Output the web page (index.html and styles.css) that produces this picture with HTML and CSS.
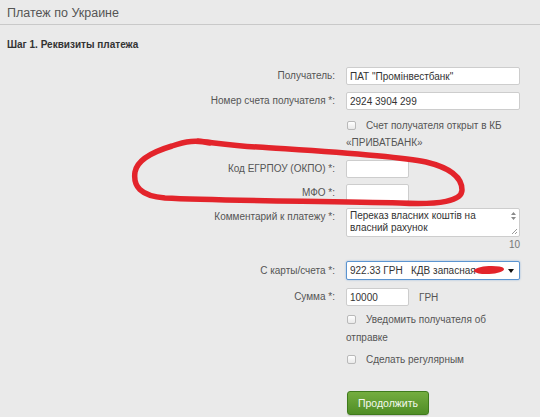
FILE: index.html
```html
<!DOCTYPE html>
<html lang="ru">
<head>
<meta charset="utf-8">
<title>Платеж по Украине</title>
<link rel="stylesheet" href="styles.css">
</head>
<body>
<div class="page">
  <h1 class="title">Платеж по Украине</h1>
  <h2 class="step">Шаг 1. Реквизиты платежа</h2>
  <div class="form">
    <div class="row r1">
      <div class="label">Получатель:</div>
      <div class="field"><input class="inp wide" type="text" value="ПАТ &quot;Промінвестбанк&quot;"></div>
    </div>
    <div class="row r2">
      <div class="label">Номер счета получателя *:</div>
      <div class="field"><input class="inp wide" type="text" value="2924 3904 299"></div>
    </div>
    <div class="row r3">
      <div class="label"></div>
      <div class="field check-text"><span class="cb"></span>Счет получателя открыт в КБ «ПРИВАТБАНК»</div>
    </div>
    <div class="row r4">
      <div class="label">Код ЕГРПОУ (ОКПО) *:</div>
      <div class="field"><input class="inp short" type="text"></div>
    </div>
    <div class="row r5">
      <div class="label">МФО *:</div>
      <div class="field"><input class="inp short" type="text"></div>
    </div>
    <div class="row r6 top">
      <div class="label lt">Комментарий к платежу *:</div>
      <div class="field">
        <div class="ta">
          <div class="ta-text">Переказ власних коштів на власний рахунок</div>
          <div class="ta-scroll">
            <svg width="7" height="10" viewBox="0 0 7 10"><path d="M1 4 L3.5 1 L6 4 Z M1 6 L3.5 9 L6 6 Z" fill="#8a8a8a"/></svg>
          </div>
          <svg class="grip" width="7" height="7" viewBox="0 0 7 7"><path d="M1 6 L6 1 M4 6 L6 4" stroke="#9a9a9a" stroke-width="1"/></svg>
        </div>
        <div class="count">10</div>
      </div>
    </div>
    <div class="row r7">
      <div class="label">С карты/счета *:</div>
      <div class="field">
        <div class="sel">
          <span class="sel-text">922.33 ГРН&nbsp;&nbsp;&nbsp;КДВ запасная</span>
          <span class="smudge"></span>
          <span class="arrow"></span>
        </div>
      </div>
    </div>
    <div class="row r8">
      <div class="label">Сумма *:</div>
      <div class="field"><input class="inp short" type="text" value="10000"><span class="cur">ГРН</span></div>
    </div>
    <div class="row r9">
      <div class="label"></div>
      <div class="field check-text lh18"><span class="cb"></span>Уведомить получателя об отправке</div>
    </div>
    <div class="row r10">
      <div class="label"></div>
      <div class="field check-text lh18"><span class="cb"></span>Сделать регулярным</div>
    </div>
    <div class="row r11">
      <div class="label"></div>
      <div class="field"><button class="btn" type="button">Продолжить</button></div>
    </div>
  </div>
  <svg class="circle" width="540" height="417" viewBox="0 0 540 417">
    <path d="M210 143 C196 140 186 141 172 146 C152 152 137 161 135 172 C133 186 140 196 165 198 C220 201 330 201 400 203 C440 205 462 201 462 190 C462 177 451 168 426 162 C392 155 300 150 258 147 C236 146 216 143 198 141" fill="none" stroke="#e3242b" stroke-width="5.5" stroke-linecap="round" stroke-linejoin="round"/>
  </svg>
</div>
</body>
</html>
```

FILE: styles.css
```css
html, body {
  margin: 0;
  padding: 0;
}
body {
  background: #eaeaea;
  font-family: "Liberation Sans", Arial, sans-serif;
  color: #555;
  font-size: 10px;
}
.page {
  position: relative;
  width: 540px;
  height: 417px;
  overflow: hidden;
}
.title {
  margin: 0;
  font-size: 12.5px;
  font-weight: normal;
  line-height: 18px;
  color: #555;
  padding: 4px 7px 2px;
  border-bottom: 1px solid #c9c9c9;
}
.step {
  margin: 13px 7px 0;
  font-size: 10px;
  line-height: 14px;
  font-weight: bold;
  color: #333;
}
.form {
  margin-top: 15px;
  display: flex;
  flex-direction: column;
}
.row {
  display: grid;
  grid-template-columns: 335px 174px;
  column-gap: 11px;
  align-items: center;
}
.row.top {
  align-items: start;
}
.label {
  text-align: right;
  color: #555;
  line-height: 14px;
}
.label.lt {
  padding-top: 2px;
}
.r2 { margin-top: 7px; }
.r3 { margin-top: 7px; }
.r4 { margin-top: 9px; }
.r5 { margin-top: 6px; }
.r6 { margin-top: 6px; }
.r7 { margin-top: 9px; }
.r8 { margin-top: 8px; }
.r9 { margin-top: 5px; }
.r10 { margin-top: 4px; }
.r11 { margin-top: 22px; }

.field {
  display: flex;
  align-items: center;
  flex-wrap: wrap;
}
.inp {
  box-sizing: border-box;
  height: 18px;
  border: 1px solid #cdcdcd;
  border-radius: 2px;
  background: #fff;
  font-family: "Liberation Sans", Arial, sans-serif;
  font-size: 10px;
  color: #333;
  padding: 0 3px;
  margin: 0;
  outline: none;
}
.inp.wide { width: 174px; }
.inp.short { width: 63px; }
.cur {
  margin-left: 10px;
  color: #555;
}
.check-text {
  display: block;
  line-height: 17px;
  color: #555;
  width: 165px;
}
.check-text.lh18 {
  line-height: 18px;
}
.cb {
  display: inline-block;
  box-sizing: border-box;
  width: 9px;
  height: 9px;
  border: 1px solid #b9b9b9;
  border-radius: 2px;
  background: linear-gradient(#fff, #e9e9e9);
  margin: 0 10px 0 1px;
  vertical-align: -1px;
}
.ta {
  position: relative;
  box-sizing: border-box;
  width: 174px;
  height: 29px;
  border: 1px solid #cdcdcd;
  border-radius: 2px;
  background: #fff;
}
.ta-text {
  padding: 1px 14px 0 3px;
  line-height: 12px;
  font-size: 10px;
  color: #333;
}
.ta-scroll {
  position: absolute;
  right: 2px;
  top: 2px;
  width: 8px;
  display: flex;
  justify-content: center;
}
.grip {
  position: absolute;
  right: 1px;
  bottom: 1px;
}
.count {
  width: 174px;
  text-align: right;
  line-height: 14px;
  margin-top: 1px;
  font-size: 10px;
  color: #777;
}
.sel {
  position: relative;
  box-sizing: border-box;
  width: 175px;
  height: 19px;
  border: 1px solid #5b94d0;
  border-radius: 2px;
  background: #fff;
  box-shadow: 0 0 2px rgba(80, 140, 210, 0.6);
  display: flex;
  align-items: center;
  padding-left: 3px;
  color: #333;
}
.sel-text {
  white-space: nowrap;
}
.smudge {
  position: absolute;
  left: 127px;
  top: 4px;
  width: 30px;
  height: 8px;
  border-radius: 50%;
  background: #e3242b;
  transform: rotate(-3deg);
}
.arrow {
  position: absolute;
  right: 5px;
  top: 7px;
  width: 0;
  height: 0;
  border-left: 3px solid transparent;
  border-right: 3px solid transparent;
  border-top: 4px solid #111;
}
.btn {
  box-sizing: border-box;
  width: 82px;
  height: 24px;
  margin-left: 1px;
  border: 1px solid #3f7a1c;
  border-radius: 3px;
  background: linear-gradient(#74ad3f, #4f8d26);
  color: #f3f8ee;
  font-family: "Liberation Sans", Arial, sans-serif;
  font-size: 10.5px;
  padding: 0;
  box-shadow: 0 1px 1px rgba(0,0,0,0.15);
}
.circle {
  position: absolute;
  left: 0;
  top: 0;
  pointer-events: none;
}
```
